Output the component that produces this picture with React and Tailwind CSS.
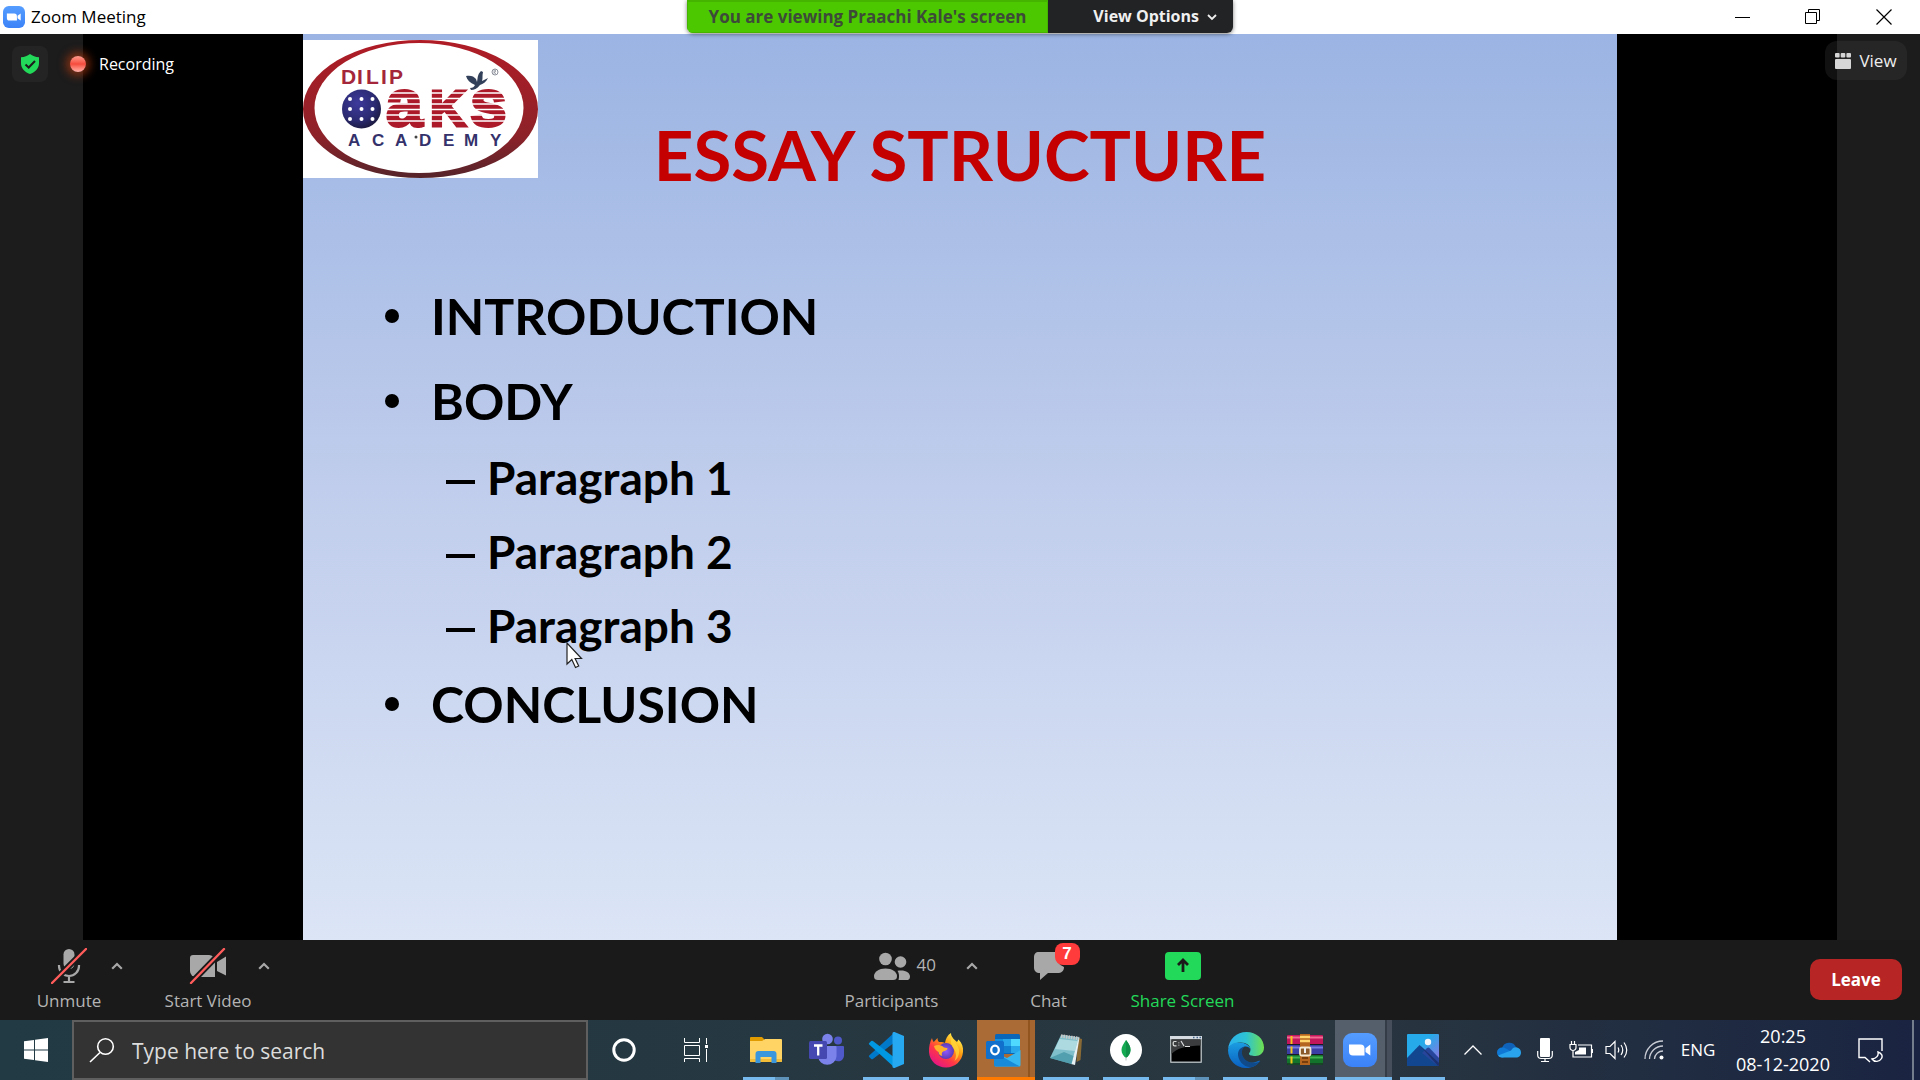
const uiFont = "font-['Open_Sans','Noto_Sans',sans-serif]";
const slideFont = "font-[Lato,'Open_Sans',sans-serif]";

function ZoomGlyph({ className, id }) {
  return (
    <svg viewBox="0 0 34 34" className={className} aria-hidden="true">
      <defs>
        <linearGradient id={id} x1="0" y1="0" x2="0" y2="1">
          <stop offset="0" stopColor="#559dff" />
          <stop offset="1" stopColor="#3b82f8" />
        </linearGradient>
      </defs>
      <rect width="34" height="34" rx="9" fill={`url(#${id})`} />
      <path d="M6 11.5h11.5a4 4 0 0 1 4 4v7H10a4 4 0 0 1-4-4z" fill="#fff" />
      <path d="M22.5 15.2 27.3 11.6v11L22.5 19z" fill="#fff" />
    </svg>
  );
}

function TitleBar() {
  return (
    <header className="relative flex h-[34px] shrink-0 items-center bg-white text-black">
      <ZoomGlyph id="title-zoom" className="ml-[3px] h-[22px] w-[22px]" />
      <h1 className="ml-[6px] text-[17px] leading-[24px]">Zoom Meeting</h1>
      <div className="ml-auto flex h-full">
        <button aria-label="Minimize" className="flex w-[70px] items-center justify-center">
          <svg width="16" height="16" viewBox="0 0 16 16"><path d="M0 8.5h15" stroke="#000" /></svg>
        </button>
        <button aria-label="Restore" className="flex w-[70px] items-center justify-center">
          <svg width="16" height="16" viewBox="0 0 16 16" fill="none" stroke="#000">
            <path d="M.5 3.500h11v11H.500z M3.500 3.500v-3h11v11h-3" />
          </svg>
        </button>
        <button aria-label="Close" className="flex w-[72px] items-center justify-center">
          <svg width="16" height="16" viewBox="0 0 16 16"><path d="m.5.5 15 15m0-15-15 15" stroke="#000" strokeWidth="1.2" /></svg>
        </button>
      </div>
      <div className="absolute left-1/2 top-0 z-20 flex h-[33px] w-[546px] -translate-x-1/2 overflow-hidden rounded-b-md text-[17px] font-bold leading-[33px] shadow-[0_1px_4px_rgba(0,0,0,0.5)]">
        <p className="flex-1 whitespace-nowrap border border-t-2 border-[#45b400] bg-[#4bc800] text-center leading-[29px] text-[#3d4a3a]">
          You are viewing Praachi Kale's screen
        </p>
        <button className="flex w-[185px] items-center justify-end gap-[8px] bg-[#222325] pr-[16px] text-[16px] text-[#f0f0f0]">
          View Options
          <svg width="10" height="8" viewBox="0 0 10 8" fill="none" stroke="#eee" strokeWidth="1.8"><path d="m1 2 4 4 4-4" /></svg>
        </button>
      </div>
    </header>
  );
}

function AcademyLogo() {
  return (
    <svg viewBox="0 0 235 138" className="block w-[235px] bg-white" role="img" aria-label="Dilip Oaks Academy">
      <defs>
        <linearGradient id="ring" x1="0" y1="0" x2="0" y2="1">
          <stop offset="0" stopColor="#b01c26" />
          <stop offset=".7" stopColor="#8d2229" />
          <stop offset="1" stopColor="#54242a" />
        </linearGradient>
        <radialGradient id="ball" cx=".4" cy=".35" r=".75">
          <stop offset="0" stopColor="#3d3a9c" />
          <stop offset=".6" stopColor="#2b2a72" />
          <stop offset="1" stopColor="#17152f" />
        </radialGradient>
      </defs>
      <ellipse cx="117.500" cy="69" rx="117.500" ry="69" fill="url(#ring)" />
      <ellipse cx="116" cy="68" rx="104.500" ry="65" fill="#fff" />
      <g fontFamily="Liberation Sans, Arial, sans-serif" fontWeight="700">
        <text y="44" x="38 54 63 78 86" fontSize="21" fill="#a3263a">DILIP</text>
        <g fill="#ac1a2a" stroke="#ac1a2a" strokeWidth="3">
          <text x="83" y="86" fontSize="66">a</text>
          <text x="127" y="86" fontSize="50">K</text>
          <text x="167" y="86" fontSize="66">s</text>
        </g>
        <text y="106" x="45 69 92 116 140 161 187" fontSize="17" fill="#34316b">ACADEMY</text>
      </g>
      <path d="M82 53h124M82 58.500h124M82 64h124M82 69.500h124M82 75h124M82 81h124" stroke="#fff" strokeWidth="1.700" />
      <circle cx="58.500" cy="69" r="19.500" fill="url(#ball)" />
      <g fill="#fff">
        <circle cx="47" cy="59" r="2" /><circle cx="58.500" cy="59" r="2" /><circle cx="69.500" cy="59" r="2" />
        <circle cx="47" cy="69" r="2" /><circle cx="58.500" cy="69" r="2" /><circle cx="69.500" cy="69" r="2" />
        <circle cx="47" cy="79" r="2" /><circle cx="58.500" cy="79" r="2" /><circle cx="69.500" cy="79" r="2" />
      </g>
      <path d="M163 36c4-1 8 0 10 3l1 3c1-4 0-7 4-11l2 1c-1 4 0 6-1 9l6-3c-2 4-5 6-8 7-3 4-6 5-9 5l-1-2c3 0 4-1 5-3-5-2-8-5-9-9z" fill="#33405a" />
      <circle cx="113" cy="97" r="1.500" fill="#444" />
      <circle cx="192" cy="32" r="3" fill="none" stroke="#8a8f98" />
      <path d="M191 34v-4h1.500v2H191l2 2" fill="none" stroke="#8a8f98" strokeWidth=".7" />
    </svg>
  );
}

function Bullet({ children }) {
  return (
    <div className="flex items-center text-[50px] leading-[64px]">
      <span className="mr-[32px] h-[14px] w-[14px] rounded-full bg-black" />
      {children}
    </div>
  );
}

function SubPoint({ children }) {
  return (
    <li className="flex items-center leading-[74px]">
      <span className="mr-[12px] mt-[8px] h-[4px] w-[29px] bg-black" />
      {children}
    </li>
  );
}

function Slide() {
  return (
    <article className={`relative flex-1 bg-linear-to-b from-[#9bb4e3] via-[#c0cdec] via-50% to-[#dbe5f6] font-bold text-black ${slideFont}`}>
      <div className="absolute left-0 top-[6px]"><AcademyLogo /></div>
      <h2 className="pt-[75px] text-center text-[69px] leading-[92px] text-[#c40000]">ESSAY STRUCTURE</h2>
      <ul className="pl-[82px] pt-[83px]">
        <li><Bullet>INTRODUCTION</Bullet></li>
        <li className="pt-[21px]">
          <Bullet>BODY</Bullet>
          <ul className="pl-[61px] pt-[8px] text-[46px]">
            <SubPoint>Paragraph 1</SubPoint>
            <SubPoint>Paragraph 2</SubPoint>
            <SubPoint>Paragraph 3</SubPoint>
          </ul>
        </li>
        <li className="pt-[9px]"><Bullet>CONCLUSION</Bullet></li>
      </ul>
      <svg className="absolute left-[263px] top-[608px]" width="17" height="27" viewBox="0 0 17 27" aria-hidden="true">
        <path d="M1 1v21l4.800-4.500 3.700 8 3.200-1.500-3.600-7.500h6.400z" fill="#fff" stroke="#222" strokeWidth="1.200" />
      </svg>
    </article>
  );
}

function SharedScreen() {
  return (
    <main className="relative flex min-h-[640px] flex-1 bg-[#1c1c1c] px-[83px]">
      <div className="flex flex-1 bg-black px-[220px]"><Slide /></div>
      <div className="absolute left-[12px] top-[12px] flex items-center text-[16px] text-white">
        <button aria-label="Meeting security" className="flex h-[36px] w-[36px] items-center justify-center rounded-lg bg-[#242424]">
          <svg width="20" height="20" viewBox="0 0 20 20">
            <path d="M10 0c2.500 2 5.500 3 9 3.300V9c0 5.500-3.500 9-9 11-5.500-2-9-5.500-9-11V3.300C4.500 3 7.500 2 10 0z" fill="#23d959" />
            <path d="m5.500 10.500 3.200 3L15 7" fill="none" stroke="#1c1c1c" strokeWidth="2" />
          </svg>
        </button>
        <span className="ml-[22px] h-[16px] w-[16px] rounded-full bg-linear-to-b from-[#ff9a8c] via-[#f44a3c] to-[#ffb0a8] shadow-[0_0_8px_4px_rgba(190,60,15,0.6)]" />
        <span className="ml-[13px]">Recording</span>
      </div>
      <button className="absolute right-[13px] top-[7px] flex h-[39px] w-[82px] items-center justify-center gap-[8px] rounded-xl bg-[#444]/25 text-[17px] text-[#eee]">
        <svg width="16" height="16" viewBox="0 0 16 16" fill="#d6d6d6">
          <rect width="4.600" height="4.600" rx="1" /><rect x="5.700" width="4.600" height="4.600" rx="1" /><rect x="11.400" width="4.600" height="4.600" rx="1" />
          <rect y="6" width="16" height="10" rx="1" />
        </svg>
        View
      </button>
    </main>
  );
}

function Caret({ label, className }) {
  return (
    <button aria-label={label} className={`flex h-[28px] w-[18px] items-center justify-center ${className}`}>
      <svg width="12" height="8" viewBox="0 0 12 8" fill="none" stroke="#a8a8a8" strokeWidth="2.200"><path d="m1.200 6.800L6 2l4.800 4.800" /></svg>
    </button>
  );
}

const tool = "flex flex-col items-center gap-[5px] text-[17px] leading-[24px] whitespace-nowrap";

function MeetingControls() {
  return (
    <footer className="flex h-[80px] shrink-0 items-start bg-[#1a1a1a] pt-[8px] text-[#b4b4b4]">
      <div className="flex flex-1 items-start pl-[34px]">
        <button className={`w-[70px] ${tool}`}>
          <svg width="36" height="36" viewBox="0 0 36 36" fill="none">
            <rect x="12.500" y="1" width="11" height="20" rx="5.500" fill="#a8a8a8" />
            <path d="M8 17v1a10 10 0 0 0 20 0v-1M18 28v5M12.500 34h11" stroke="#a8a8a8" strokeWidth="2.200" />
            <path d="M1 35 35 1" stroke="#1a1a1a" strokeWidth="6" />
            <path d="M1 35 35 1" stroke="#ff5c5c" strokeWidth="2.400" strokeLinecap="round" />
          </svg>
          Unmute
        </button>
        <Caret label="Audio options" className="ml-[4px] mt-[4px]" />
        <button className={`ml-[32px] w-[100px] ${tool}`}>
          <svg width="38" height="36" viewBox="0 0 38 36" fill="#a8a8a8">
            <path d="M4 7h16a6 6 0 0 1 6 6v16H7a6 6 0 0 1-6-6V10a3 3 0 0 1 3-3z" />
            <path d="m28 14 9-5.500v19L28 23z" />
            <path d="M2 35 35 1" stroke="#1a1a1a" strokeWidth="6" />
            <path d="M2 35 35 1" stroke="#ff5c5c" strokeWidth="2.400" strokeLinecap="round" />
          </svg>
          Start Video
        </button>
        <Caret label="Video options" className="ml-[-3px] mt-[4px]" />
      </div>

      <div className="flex items-start pl-[144px]">
        <div className="relative">
          <button className={`w-[100px] ${tool}`}>
            <svg width="38" height="36" viewBox="0 0 38 36" fill="#a8a8a8">
              <circle cx="12.500" cy="11" r="6.300" /><circle cx="27.500" cy="14" r="5.800" />
              <path d="M1 28c0-4 5-7.500 11.500-7.500S24 24 24 28c0 3-1.500 4-4 4H5c-2.500 0-4-1-4-4z" />
              <path d="M24.500 22.800c7-1.500 12.500 1.500 12.500 5.600 0 2.600-1.300 3.600-3.500 3.600h-8c1-3.500.7-6.500-1-9.200z" />
            </svg>
            Participants
          </button>
          <span className="absolute left-[75px] top-[5px] text-[17px] leading-[24px]">40</span>
        </div>
        <Caret label="Participant options" className="ml-[21px] mt-[4px]" />
        <button className={`relative ml-[43px] w-[50px] ${tool}`}>
          <svg width="34" height="36" viewBox="0 0 34 36" fill="#a8a8a8">
            <path d="M7 4h18v4.500A9.500 9.500 0 0 0 32 19c0 4-2.500 6-6.500 6H16l-8 7v-7c-4 0-6-2-6-5.500V9.500C2 6 3.500 4 7 4z" />
          </svg>
          <span className="absolute left-[31px] top-[-5px] flex h-[22px] w-[25px] items-center justify-center rounded-lg bg-[#ff3b3b] font-['Liberation_Sans',Arial,sans-serif] text-[17px] font-bold text-white">7</span>
          Chat
        </button>
        <button className={`ml-[53px] w-[112px] text-[#23d959] ${tool}`}>
          <svg width="36" height="36" viewBox="0 0 36 36">
            <rect y="4" width="36" height="28" rx="4" fill="#23d959" />
            <path d="M18 24V12m-5 5 5-5 5 5" fill="none" stroke="#1a1a1a" strokeWidth="2.800" />
          </svg>
          Share Screen
        </button>
      </div>

      <div className="flex flex-1 justify-end pr-[18px] pt-[11px]">
        <button className="h-[41px] w-[92px] rounded-[10px] bg-[#b82525] text-[17px] font-bold text-white">Leave</button>
      </div>
    </footer>
  );
}

function FolderIcon() {
  return (
    <svg width="36" height="36" viewBox="0 0 36 36">
      <path d="M2 6a1 1 0 0 1 1-1h11l2 2v4H2z" fill="#e09b00" />
      <path d="M2 9h12l3-2h16a1 1 0 0 1 1 1v21a1 1 0 0 1-1 1H3a1 1 0 0 1-1-1z" fill="#ffd464" />
      <path d="M2 27h32v2a1 1 0 0 1-1 1H3a1 1 0 0 1-1-1z" fill="#f3bd38" />
      <path d="M7.500 31V22a3 3 0 0 1 3-3h15a3 3 0 0 1 3 3v9h-5v-6h-11v6z" fill="#3a96dd" />
    </svg>
  );
}

function TeamsIcon() {
  return (
    <svg width="36" height="36" viewBox="0 0 36 36">
      <circle cx="30" cy="8.500" r="4" fill="#5059c9" />
      <path d="M24 14h11a1 1 0 0 1 1 1v8c0 8-10 8-12 2z" fill="#5059c9" />
      <circle cx="19.500" cy="7" r="5.300" fill="#7b83eb" />
      <path d="M11 14h16.500a1 1 0 0 1 1 1v9.500a9.300 9.300 0 0 1-18.500 0z" fill="#7b83eb" />
      <rect y="9" x="1" width="18" height="18" rx="1.500" fill="#4448b0" />
      <path d="M6 13.500h8.500M10.200 13.500v10" stroke="#fff" strokeWidth="2.300" />
    </svg>
  );
}

function CodeIcon() {
  return (
    <svg width="36" height="36" viewBox="0 0 36 36">
      <path d="M27 0 1.200 23.500a1 1 0 0 0 0 1.500l2 1.900a1.300 1.300 0 0 0 1.700 0L27 10z" fill="#0179cb" />
      <path d="M27 36 1.200 12.500a1 1 0 0 1 0-1.500l2-1.900a1.300 1.300 0 0 1 1.700 0L27 26z" fill="#0098e2" />
      <path d="M26.500 0 36 4v28l-9.500 4c-1 .3-2-1-2-1V1s1-1.500 2-1z" fill="#27a9f2" />
    </svg>
  );
}

function FirefoxIcon() {
  return (
    <svg width="36" height="36" viewBox="0 0 36 36">
      <defs>
        <linearGradient id="fox" x1=".85" y1=".1" x2=".2" y2=".95">
          <stop offset="0" stopColor="#fff44f" /><stop offset=".35" stopColor="#ff980e" />
          <stop offset=".65" stopColor="#ff3647" /><stop offset="1" stopColor="#e31587" />
        </linearGradient>
        <radialGradient id="globe"><stop offset="0" stopColor="#9059ff" /><stop offset="1" stopColor="#5b3bb5" /></radialGradient>
      </defs>
      <path d="M4 6c.3 1.800 1 3 1.800 4L9.500 6c0 2 .5 3.200 1.500 4 2-.2 4-.2 6 1 .5-4 2.500-8 6-10 0 4 3 6 6 9l1.500-2.500C34 11 35.500 15 35 20c-.7 9-8 15.500-17 15.500S1.500 29 1 20C.7 14.500 2 10 4 6z" fill="url(#fox)" />
      <circle cx="18" cy="19" r="8" fill="url(#globe)" />
      <path d="M6 14c4-2 8-1 10 1.500 2 .3 4 .3 3.500 1.500-.7 1.500-4 2-5 3-1 1.500-1 3 0 4-3-.5-4-2-4-4-2-1-4-3-4.500-6z" fill="#ffb12c" />
      <path d="M24 5c2 5 5 7 6.500 11 1.500 5 0 10-4 13 3-6 1-10-2-14-2-3-2-7-.5-10z" fill="#ffd83c" opacity=".75" />
    </svg>
  );
}

function OutlookIcon() {
  return (
    <svg width="36" height="36" viewBox="0 0 36 36">
      <rect x="10" y="2" width="25" height="20" rx="1.500" fill="#0a66b8" />
      <path d="M10 7h8v7h-8z" fill="#1490df" /><path d="M18 7h8v7h-8z" fill="#28a8ea" /><path d="M26 7h9v7h-9z" fill="#50d9ff" />
      <path d="M18 14h8v7h-8z" fill="#1180d0" /><path d="M26 14h9v7h-9z" fill="#28a8ea" />
      <path d="M35.500 18v15a1.500 1.500 0 0 1-1.500 1.500H10L9 20l13 6z" fill="#35b8f1" />
      <path d="m9 20 26 14.500H10.500A1.500 1.500 0 0 1 9 33z" fill="#178ada" />
      <rect y="9" x="1" width="18" height="18" rx="1.500" fill="#1070cb" />
      <ellipse cx="10" cy="18" rx="3.800" ry="4.300" fill="none" stroke="#fff" strokeWidth="2.300" />
    </svg>
  );
}

function NotepadIcon() {
  return (
    <svg width="36" height="36" viewBox="0 0 36 36">
      <path d="m30 6 4 1-1.500 21-4 2z" fill="#8a6a35" />
      <path d="m14 3 17.500 2.500L27 33l-4-1z" fill="#e6f0f2" />
      <path d="M13 3 30.500 5.500 23.500 32 2 26z" fill="#7fbfcb" />
      <path d="M11.500 7 29.500 9 27 19 7 17z" fill="#b9e0e6" opacity=".8" />
      <path d="M2 26 23.500 32l2-8L16 20z" fill="#3f92a2" opacity=".7" />
      <path d="m13 4 18 2.500" stroke="#c9c9c9" strokeWidth="3.500" strokeDasharray="1.500 1" />
    </svg>
  );
}

function MongoIcon() {
  return (
    <svg width="36" height="36" viewBox="0 0 36 36">
      <circle cx="18" cy="18" r="16" fill="#fff" />
      <path d="M18 8c3 4 4.500 6.500 4.500 10S20.500 24 18 26c-2.500-2-4.500-4.500-4.500-8S15.500 12 18 8z" fill="#13aa52" />
      <path d="M18 8c3 4 4.500 6.500 4.500 10S20.500 24 18 26z" fill="#0f8f47" />
      <path d="M18 25v3.500" stroke="#b8c4c2" />
    </svg>
  );
}

function TerminalIcon() {
  return (
    <svg width="36" height="36" viewBox="0 0 36 36">
      <rect x="2" y="4" width="32" height="27" rx="1" fill="#a9b0b4" />
      <rect x="2" y="4" width="32" height="3" fill="#d5dbe0" />
      <path d="M25 5.500h1.500m2 0H30m1.500 0H33" stroke="#45668c" strokeWidth="1.500" />
      <rect x="3.500" y="7.500" width="29" height="22" fill="#000" />
      <path d="M3.500 7.500h29v6C18 14 9 16 3.500 22z" fill="#3a3c3d" />
      <path d="M8.500 9.500H6.500a1.300 1.300 0 0 0-1.300 1.300v1.700a1.300 1.300 0 0 0 1.300 1.300h2M10.800 10.500v.8m0 1.500v.8M13 9l3 5M17 14.500h5" fill="none" stroke="#ddd" strokeWidth="1.200" />
    </svg>
  );
}

function EdgeIcon() {
  return (
    <svg width="36" height="36" viewBox="0 0 36 36">
      <defs>
        <linearGradient id="edge-a" x1="0" x2="1"><stop offset="0" stopColor="#2bb0ee" /><stop offset=".5" stopColor="#2dc3d4" /><stop offset="1" stopColor="#6fe04f" /></linearGradient>
        <linearGradient id="edge-b" x1="0" y1="0" x2="0" y2="1"><stop offset="0" stopColor="#1b9de2" /><stop offset="1" stopColor="#0a5fc0" /></linearGradient>
      </defs>
      <path d="M0 17C1 7 8.500 0 18.500 0 28.500 0 36 7 36 15.500c0 5.500-4 8.500-8.500 8.500-4 0-6.500-1-6.500-2.300 0-1 1.500-1.500 1.500-4.200 0-4-4-7-9.500-7C7 10.500 2 13 0 17z" fill="url(#edge-a)" />
      <path d="M0 18c1-5 5-7.500 10.500-7.500 7 0 12 3.500 12 7-1-2.500-3.500-3.500-5.500-3-3.500 1-5 5-3.500 9.500C15.500 30 22 32 28 30c1.500-.5 3.500-1.500 4-1-3 4.500-8 7-14 7C8 36 0 28 0 18z" fill="url(#edge-b)" />
      <path d="M17 14.500c-6 1-8 6-6.500 11C12.500 32 18 35.500 24 35c4-1.500 7-4 8.500-6-7 4-15 1-17.500-4.500-2-4-1-8 2-10z" fill="#114a8b" />
    </svg>
  );
}

function ArchiveIcon() {
  return (
    <svg width="38" height="36" viewBox="0 0 38 36">
      <rect x="1" y="3" width="36" height="10" rx="1" fill="#c2185b" /><path d="M1 5.500h36" stroke="#f06a92" strokeWidth="2" />
      <rect x="1" y="13" width="36" height="10" rx="1" fill="#3b3fa5" /><path d="M1 15.500h36" stroke="#777be0" strokeWidth="2" />
      <rect x="1" y="23" width="36" height="10" rx="1" fill="#14732b" /><path d="M1 25.500h36" stroke="#3fb44f" strokeWidth="2" />
      <path d="M1 12.500h36M1 22.500h36M1 32h36" stroke="#1a1a22" />
      <path d="M5.500 4v8m0 2.500v7m0 3v7" stroke="#f5c518" strokeWidth="2" />
      <rect x="14" y="2" width="10" height="31" fill="#b5651d" /><path d="M14 5h10M14 9h10" stroke="#ffd46b" strokeWidth="2.500" />
      <path d="M16 26h6M16 30h6" stroke="#7a3d0c" strokeWidth="2" />
      <rect x="14" y="15.500" width="10.500" height="8" rx="1.500" fill="#8b5a2b" stroke="#f4e8d0" strokeWidth="1.800" /><path d="M19 16v5" stroke="#eee" strokeWidth="2" />
    </svg>
  );
}

function PhotosIcon() {
  return (
    <svg width="36" height="36" viewBox="0 0 36 36">
      <defs>
        <linearGradient id="sky" x1="0" y1="0" x2="1" y2="1"><stop offset=".4" stopColor="#27aae9" /><stop offset="1" stopColor="#a06be0" /></linearGradient>
      </defs>
      <rect x="2" y="2" width="32" height="32" rx="1" fill="url(#sky)" />
      <path d="M2 26 14.500 13 34 31v2a1 1 0 0 1-1 1H2z" fill="#12478f" />
      <path d="m17 21 5-5a2 2 0 0 1 2.500 0L34 26v7a1 1 0 0 1-1 1z" fill="#27459a" />
      <path d="M14.500 13 34 31v2a1 1 0 0 1-1 1z" fill="#1b3170" />
      <circle cx="23" cy="10" r="3.200" fill="#f2f6fb" />
    </svg>
  );
}

const bar = "absolute bottom-0 h-[3px] bg-[#76b9ed]";

function TaskButton({ label, width = "w-[60px]", running = true, double = false, children }) {
  return (
    <button aria-label={label} className={`relative flex h-full shrink-0 items-center justify-center ${width}`}>
      {children}
      {running && !double && <span className={`inset-x-[7px] ${bar}`} />}
      {double && <><span className={`left-[7px] w-[32px] ${bar}`} /><span className={`left-[39px] w-[14px] opacity-70 ${bar}`} /></>}
    </button>
  );
}

function Taskbar() {
  return (
    <nav aria-label="Taskbar" className="flex h-[60px] shrink-0 items-center bg-linear-to-r from-[#213a44] via-[#29363f] via-70% to-[#1a2442] text-white">
      <button aria-label="Start" className="flex h-full w-[72px] shrink-0 items-center justify-center">
        <svg width="24" height="24" viewBox="0 0 24 24" fill="#fff">
          <path d="M0 3.300 10 2v9.500H0zM11 1.800 24 0v11.500H11zM0 12.500h10V22L0 20.700zM11 12.500h13V24l-13-1.800z" />
        </svg>
      </button>
      <label className="flex h-full w-[516px] items-center border-2 border-[#5f5f5f] bg-[#333] pl-[15px]">
        <svg width="26" height="26" viewBox="0 0 26 26" fill="none" stroke="#fff" strokeWidth="1.600">
          <circle cx="16.500" cy="9.500" r="7.800" /><path d="M11 15.500 1 25" />
        </svg>
        <input aria-label="Search" placeholder="Type here to search" className="ml-[17px] h-[40px] min-w-0 flex-1 bg-transparent pt-[2px] text-[21px] outline-none placeholder:text-[#dcdcdc]" />
      </label>
      <button aria-label="Cortana" className="flex h-full w-[72px] shrink-0 items-center justify-center">
        <svg width="24" height="24" viewBox="0 0 24 24"><circle cx="12" cy="12" r="10.200" fill="none" stroke="#fff" strokeWidth="3" /></svg>
      </button>
      <button aria-label="Task view" className="mr-[5px] flex h-full w-[71px] shrink-0 items-center justify-center">
        <svg width="24" height="24" viewBox="0 0 24 24" fill="none" stroke="#fff">
          <path d="M.5 0v4.500h15V0M.5 7.500h15v10H.5zM.5 24v-3.500h15V24M22.500 0v6M22.500 11v13" /><path d="M21 7h3v3h-3z" fill="#fff" stroke="none" />
        </svg>
      </button>
      <TaskButton label="File Explorer" double><FolderIcon /></TaskButton>
      <TaskButton label="Teams" running={false}><TeamsIcon /></TaskButton>
      <TaskButton label="Visual Studio Code"><CodeIcon /></TaskButton>
      <TaskButton label="Firefox"><FirefoxIcon /></TaskButton>
      <button aria-label="Outlook" className="mx-[1px] flex h-full w-[58px] shrink-0 items-center border-b-[3px] border-[#ff7a00] bg-[#ab6b36]">
        <span className="flex h-full w-[51px] items-center justify-center pt-[3px]"><OutlookIcon /></span>
        <span className="h-full flex-1 border-l-2 border-[#93551f] bg-[#a46530]" />
      </button>
      <TaskButton label="Notepad"><NotepadIcon /></TaskButton>
      <TaskButton label="MongoDB Compass"><MongoIcon /></TaskButton>
      <TaskButton label="Command Prompt" double><TerminalIcon /></TaskButton>
      <TaskButton label="Edge" width="w-[59px]"><EdgeIcon /></TaskButton>
      <TaskButton label="WinRAR" width="w-[59px]"><ArchiveIcon /></TaskButton>
      <button aria-label="Zoom" className="mx-[1px] flex h-full w-[57px] shrink-0 items-center border-b-[3px] border-[#76b9ed] bg-[#555f6b]">
        <span className="flex h-full w-[50px] items-center justify-center pt-[3px]"><ZoomGlyph id="task-zoom" className="h-[34px] w-[34px]" /></span>
        <span className="h-full flex-1 border-l-2 border-[#333c47] bg-[#454e5a]" />
      </button>
      <TaskButton label="Photos" width="w-[59px]"><PhotosIcon /></TaskButton>

      <div className="ml-auto flex h-full shrink-0 items-center">
        <button aria-label="Show hidden icons" className="flex w-[36px] justify-center">
          <svg width="18" height="10" viewBox="0 0 18 10" fill="none" stroke="#fff" strokeWidth="1.300"><path d="m.5 9.500 8.500-8.500 8.500 8.500" /></svg>
        </button>
        <button aria-label="OneDrive" className="flex w-[36px] justify-center">
          <svg width="24" height="16" viewBox="0 0 24 16">
            <path d="M5 6a7.500 7.500 0 0 1 14-1l-7 6z" fill="#0f62b8" />
            <path d="M5 5.500a5 5 0 0 1 4 1l7 4-10 5H5A5 5 0 0 1 5 5.500z" fill="#0f78d4" />
            <path d="M14 8.500c1.500-3 4-4 6-3 2.500.5 4 2.500 4 5 0 3-2 5-5 5H5c-2 0-3-.8-4-2z" fill="#28a3ec" />
          </svg>
        </button>
        <button aria-label="Microphone in use" className="flex w-[36px] justify-center">
          <svg width="16" height="24" viewBox="0 0 16 24" fill="none" stroke="#fff" strokeWidth="1.200">
            <rect x="3" y="0" width="10" height="19" rx="1" fill="#fff" stroke="none" /><path d="M.7 13v4a3.500 3.500 0 0 0 3.500 3.500h7.600a3.500 3.500 0 0 0 3.500-3.500v-4M8 20.500V23.500M4 23.500h8" />
          </svg>
        </button>
        <button aria-label="Battery" className="flex w-[36px] justify-center">
          <svg width="24" height="18" viewBox="0 0 24 18" fill="none" stroke="#fff" strokeWidth="1.200">
            <path d="M9 4h13.500v12H4v-4M23.500 8v4M1 3.500h6v3a3 3 0 0 1-6 0zM2.500 3.500V0M5.500 3.500V0M4 9.500V14" /><path d="M10 6.500h7v7H6V11l4-2z" fill="#fff" stroke="none" />
          </svg>
        </button>
        <button aria-label="Volume" className="flex w-[36px] justify-center">
          <svg width="24" height="20" viewBox="0 0 24 20" fill="none" stroke="#fff" strokeWidth="1.200">
            <path d="M1 6.500h4l5-5v17l-5-5H1zM13 7.500q1.500 2.500 0 5M16 5q3.500 5 0 10M19 2.500q5.500 7.500 0 15" />
          </svg>
        </button>
        <button aria-label="Network" className="flex w-[38px] justify-center">
          <svg width="20" height="20" viewBox="0 0 20 20" fill="none" stroke="#c8ccd4" strokeWidth="1.300">
            <path d="M1 19A18 18 0 0 1 19 1M5.500 19A13.500 13.500 0 0 1 19 6M10.500 19A8.500 8.500 0 0 1 19 11" /><circle cx="17.500" cy="17.500" r="2" fill="#fff" stroke="none" />
          </svg>
        </button>
        <button className="w-[50px] text-center text-[17px]">ENG</button>
        <div className="w-[120px] text-center text-[18px] leading-[28px]">
          <time className="block">20:25</time>
          <time className="block">08-12-2020</time>
        </div>
        <button aria-label="Notifications" className="mr-[15px] flex w-[54px] justify-center">
          <svg width="25" height="25" viewBox="0 0 25 25" fill="none" stroke="#fff" strokeWidth="1.400">
            <path d="M12 24 7 19.500H1V1h23v12M20 14c.8 3.500-1.500 6.500-6 7 2.500 3.500 7.500 3 9.500-.5 1.500-2.500 0-5.500-3.500-6.500z" />
          </svg>
        </button>
        <button aria-label="Show desktop" className="h-full w-[8px] border-l-2 border-[#747d8c]" />
      </div>
    </nav>
  );
}

export default function App() {
  return (
    <div className={`flex min-h-screen flex-col bg-[#1a1a1a] ${uiFont}`}>
      <TitleBar />
      <SharedScreen />
      <MeetingControls />
      <Taskbar />
    </div>
  );
}
